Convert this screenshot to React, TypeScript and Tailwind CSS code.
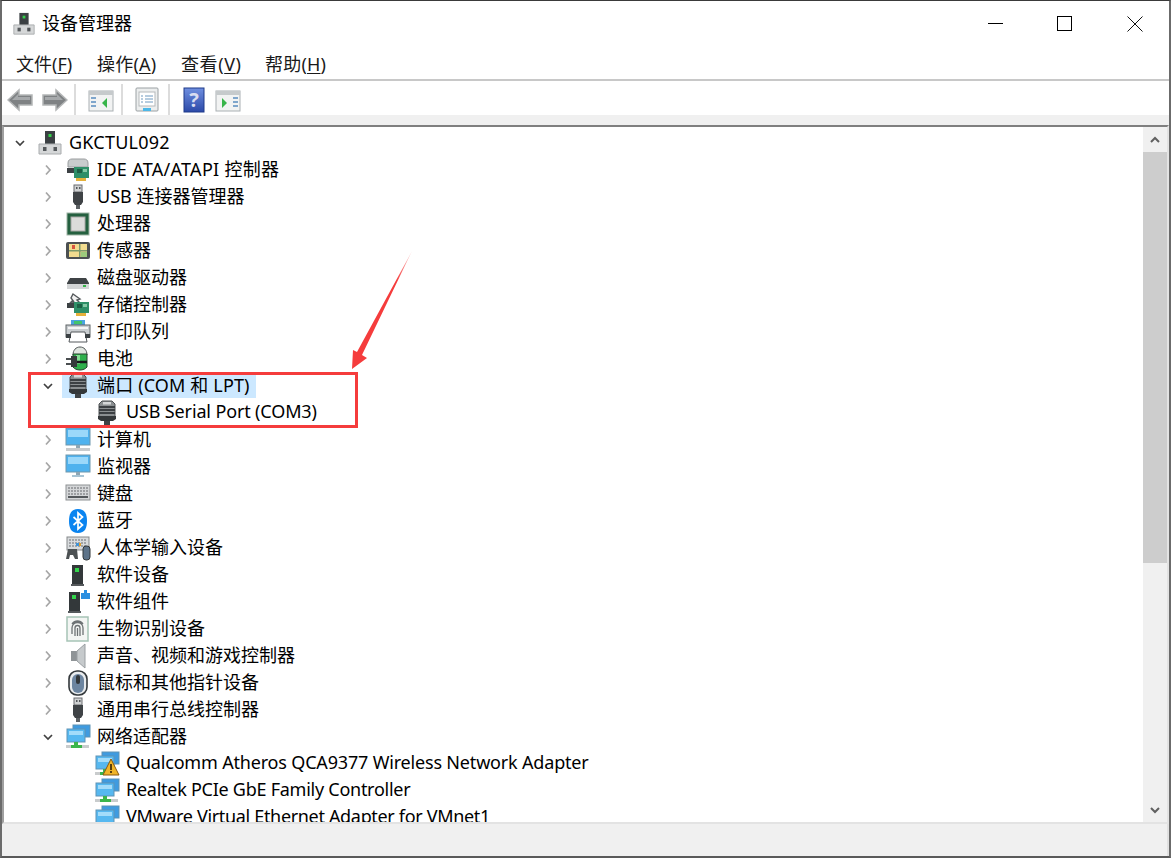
import type { ReactNode } from 'react';

const font = 'font-["Noto_Sans","Noto_Sans_CJK_SC",sans-serif]';

function Svg({ children, size = 26 }: { children: ReactNode; size?: number }) {
  return (
    <svg width={size} height={size} viewBox="0 0 26 26" className="shrink-0">
      {children}
    </svg>
  );
}

// device icons, drawn on a 26 box
const Tower = ({ size = 26 }: { size?: number }) => (
  <Svg size={size}>
    <rect x="8" y="1" width="10" height="15" fill="#3b4043" />
    <rect x="11.5" y="4" width="3" height="3" fill="#35d04a" />
    <path d="M2 14h22v10H2z" fill="#d5d7d8" stroke="#a9acae" />
    <rect x="6" y="17" width="3.5" height="4" fill="#55595c" />
    <rect x="16.5" y="17" width="3.5" height="4" fill="#55595c" />
  </Svg>
);

const Card = ({ arrow }: { arrow?: boolean }) => (
  <Svg>
    {arrow ? (
      <path d="M8 2l7 5-3 1 3 3H5l2-2 2 1-3-4z" fill="#f2f2f2" stroke="#55595c" strokeWidth="1.4" />
    ) : (
      <path d="M3 6c0-3 2-4 4-4h12c2 0 4 1 4 4v4H3z" fill="#c9cccd" stroke="#9a9d9f" />
    )}
    <path d="M2 11h13v5H2z" fill="#3c4144" />
    <rect x="9" y="10" width="15" height="11" fill="#2f8f68" />
    <rect x="12" y="12" width="5" height="4" fill="#1d5f45" />
    <rect x="18" y="12" width="4" height="3" fill="#86c8a6" />
    <rect x="11" y="21" width="10" height="3" fill="#e5b13a" />
  </Svg>
);

const Plug = () => (
  <Svg>
    <rect x="9" y="1" width="8" height="7" fill="#cfd1d2" stroke="#6a6d70" />
    <rect x="11" y="3" width="1.5" height="2" fill="#55595c" />
    <rect x="14" y="3" width="1.5" height="2" fill="#55595c" />
    <path d="M8 8h10v10l-2 3h-6l-2-3z" fill="#3f4346" />
    <rect x="11" y="21" width="4" height="4" fill="#5c6063" />
  </Svg>
);

const Cpu = () => (
  <Svg>
    <rect x="1.5" y="1.5" width="23" height="23" fill="#9fb5a6" />
    <rect x="2.5" y="2.5" width="21" height="21" fill="#24603f" />
    <rect x="6" y="6" width="14" height="14" fill="#dcdcda" stroke="#a8a8a6" />
  </Svg>
);

const Sensor = () => (
  <Svg>
    <rect x="1" y="4" width="24" height="17" rx="2" fill="#4c5052" />
    <rect x="4" y="6" width="18" height="13" fill="#f2dc8f" />
    <rect x="4" y="12" width="18" height="1.5" fill="#7d9a6a" />
    <rect x="14" y="6" width="1.5" height="13" fill="#7d9a6a" />
    <rect x="7" y="7" width="3" height="4" fill="#d8553f" />
    <rect x="16" y="14" width="6" height="5" fill="#9dcb7c" />
  </Svg>
);

const Disk = () => (
  <Svg>
    <path d="M5 13h16l3 5v5H2v-5z" fill="#3f4346" />
    <rect x="2" y="19" width="22" height="5" fill="#d3d5d6" />
    <rect x="18" y="20" width="3" height="2" fill="#36b24a" />
  </Svg>
);

const Printer = () => (
  <Svg>
    <rect x="6" y="1" width="14" height="7" fill="#4aa3e0" />
    <rect x="9" y="2" width="8" height="3" fill="#42c46b" />
    <rect x="1" y="6" width="24" height="12" fill="#c9cdd0" stroke="#5f6467" />
    <rect x="3" y="8" width="20" height="2" fill="#f5f5f5" />
    <path d="M6 13h14l2 10H4z" fill="#fff" stroke="#55595c" />
    <rect x="1" y="15" width="5" height="4" fill="#3b4043" />
    <rect x="20" y="15" width="5" height="4" fill="#3b4043" />
  </Svg>
);

const Battery = () => (
  <Svg>
    <path d="M8 9c0-5 3-8 7-8s7 3 7 8z" fill="#dfe5df" stroke="#4e5355" />
    <path d="M8 8h14v13c-3 4-11 4-14 0z" fill="#2fb04c" stroke="#26402d" />
    <path d="M11 9h4v9h-4z" fill="#84de94" />
    <path d="M1 13h6M1 18h6" stroke="#4a4e50" strokeWidth="2" />
    <path d="M6 10h6v11H6z" fill="#35393b" />
    <path d="M12 16h10" stroke="#17191a" strokeWidth="2.5" />
  </Svg>
);

const Port = () => (
  <Svg>
    <path d="M8 1h10l3 3v13H5V4z" fill="#8b8f91" stroke="#4c5053" />
    <path d="M5 7h16M5 10h16M5 13h16" stroke="#3c4043" strokeWidth="1.8" />
    <rect x="9" y="2" width="8" height="2.5" fill="#d5d7d8" />
    <path d="M4 16h18v3l-3 2H7l-3-2z" fill="#34383a" />
    <rect x="10" y="21" width="6" height="4" fill="#3f4346" />
  </Svg>
);

const Monitor = ({ laptop }: { laptop?: boolean }) => (
  <Svg>
    <rect x="1" y="1" width="24" height="17" fill="#4fb2ee" stroke="#6f97ad" />
    <rect x="3" y="3" width="20" height="7" fill="#9bd8fa" />
    <rect x="11" y="18" width="4" height="3" fill="#8fa6b3" />
    {laptop ? (
      <rect x="1" y="21" width="24" height="3" fill="#c8cbcd" />
    ) : (
      <rect x="7" y="21" width="12" height="2" fill="#a8c4d4" />
    )}
  </Svg>
);

const Keyboard = () => (
  <Svg>
    <rect x="1" y="4" width="24" height="15" fill="#d4d6d8" stroke="#8e9193" />
    <path d="M3 7h20M3 10h20M3 13h20" stroke="#8a8d90" strokeWidth="1.4" strokeDasharray="2 1" />
    <rect x="3" y="15" width="20" height="2" fill="#55595c" />
  </Svg>
);

const Bluetooth = () => (
  <Svg>
    <path d="M13 1c7 0 9 5 9 12s-2 12-9 12S4 20 4 13 6 1 13 1z" fill="#0a84f0" />
    <path d="M8.5 9l9 8-4.5 4V5l4.5 4-9 8" fill="none" stroke="#fff" strokeWidth="1.7" />
  </Svg>
);

const Hid = () => (
  <Svg>
    <rect x="2" y="2" width="22" height="13" fill="#d8dbdd" stroke="#85898b" />
    <path d="M4 5h18M4 8h18M4 11h18" stroke="#8f9396" strokeWidth="1.3" strokeDasharray="2 1" />
    <rect x="11" y="8" width="3" height="3" fill="#3f94dc" />
    <rect x="14" y="8" width="2" height="3" fill="#e0a030" />
    <path d="M1 24l2-10h9l1 10h-3l-2-4H5l-1 4z" fill="#4c5153" />
    <rect x="18" y="11" width="7" height="14" rx="3" fill="#5d7389" stroke="#33383b" />
  </Svg>
);

const SoftDevice = ({ puzzle }: { puzzle?: boolean }) => (
  <Svg>
    <rect x={puzzle ? 4 : 7} y="3" width="11" height="20" fill="#33383a" />
    <rect x={puzzle ? 7 : 10} y="6" width="4" height="4" fill="#33d64c" />
    <rect x={puzzle ? 3 : 6} y="22" width="13" height="2" fill="#55595c" />
    {puzzle && <path d="M16 4h3V1h3v3h3v6h-9z" fill="#2a8fe0" />}
  </Svg>
);

const Fingerprint = () => (
  <Svg>
    <rect x="2" y="1" width="21" height="24" fill="#f3f5f3" stroke="#a6c4b6" strokeWidth="1.5" />
    <path
      d="M7 18v-6a5.5 5.5 0 0 1 11 0v7M10 20v-8a2.5 2.5 0 0 1 5 0v8M12.5 12v8M7 8c3-4 8-4 11 0"
      fill="none"
      stroke="#6d7274"
      strokeWidth="1.3"
    />
  </Svg>
);

const Speaker = () => (
  <Svg>
    <rect x="6" y="8" width="6" height="10" fill="#8f9497" />
    <path d="M12 8l8-7v24l-8-7z" fill="#c6cacc" stroke="#9a9fa2" />
  </Svg>
);

const Mouse = () => (
  <Svg>
    <rect x="4" y="1" width="18" height="24" rx="8" fill="#e9ecee" stroke="#33383b" strokeWidth="1.6" />
    <rect x="7" y="4" width="12" height="19" rx="6" fill="#6c85a0" />
    <rect x="11" y="5" width="4" height="9" rx="2" fill="#33383b" />
  </Svg>
);

const Net = ({ warn }: { warn?: boolean }) => (
  <Svg>
    <rect x="8" y="1" width="17" height="12" fill="#3f9be0" stroke="#5e93b5" />
    <rect x="2" y="5" width="18" height="13" fill="#56b8f0" stroke="#5e93b5" />
    <rect x="4" y="7" width="14" height="4" fill="#a3dcfa" />
    <rect x="9" y="18" width="4" height="3" fill="#3cb54c" />
    <rect x="1" y="21" width="23" height="3" fill="#c9cccd" />
    <rect x="6" y="21" width="11" height="3" fill="#3cb54c" />
    {warn && (
      <>
        <path d="M17 8l8 16H9z" fill="#f0b428" stroke="#8a5a10" />
        <rect x="16.2" y="13" width="1.6" height="6" fill="#33230a" />
        <rect x="16.2" y="20" width="1.6" height="2" fill="#33230a" />
      </>
    )}
  </Svg>
);

function Chevron({ open }: { open?: boolean }) {
  return (
    <svg width="16" height="16" viewBox="0 0 16 16" className="shrink-0">
      <path
        d={open ? 'M4 6l4 4 4-4' : 'M6 3.5l4 4.5-4 4.5'}
        fill="none"
        stroke={open ? '#404040' : '#a6a6a6'}
        strokeWidth="1.7"
      />
    </svg>
  );
}

type Row = {
  label: string;
  icon: ReactNode;
  level: number;
  open?: boolean;
  leaf?: boolean;
  selected?: boolean;
  track?: string;
};

const rows: Row[] = [
  { label: 'GKCTUL092', icon: <Tower />, level: 0, open: true, track: 'tracking-[0.22px]' },
  { label: 'IDE ATA/ATAPI 控制器', icon: <Card />, level: 1, track: 'tracking-[0.3px]' },
  { label: 'USB 连接器管理器', icon: <Plug />, level: 1 },
  { label: '处理器', icon: <Cpu />, level: 1 },
  { label: '传感器', icon: <Sensor />, level: 1 },
  { label: '磁盘驱动器', icon: <Disk />, level: 1 },
  { label: '存储控制器', icon: <Card arrow />, level: 1 },
  { label: '打印队列', icon: <Printer />, level: 1 },
  { label: '电池', icon: <Battery />, level: 1 },
  { label: '端口 (COM 和 LPT)', icon: <Port />, level: 1, open: true, selected: true, track: 'tracking-[0.15px]' },
  { label: 'USB Serial Port (COM3)', icon: <Port />, level: 2, leaf: true, track: 'tracking-[-0.14px]' },
  { label: '计算机', icon: <Monitor laptop />, level: 1 },
  { label: '监视器', icon: <Monitor />, level: 1 },
  { label: '键盘', icon: <Keyboard />, level: 1 },
  { label: '蓝牙', icon: <Bluetooth />, level: 1 },
  { label: '人体学输入设备', icon: <Hid />, level: 1 },
  { label: '软件设备', icon: <SoftDevice />, level: 1 },
  { label: '软件组件', icon: <SoftDevice puzzle />, level: 1 },
  { label: '生物识别设备', icon: <Fingerprint />, level: 1 },
  { label: '声音、视频和游戏控制器', icon: <Speaker />, level: 1 },
  { label: '鼠标和其他指针设备', icon: <Mouse />, level: 1 },
  { label: '通用串行总线控制器', icon: <Plug />, level: 1 },
  { label: '网络适配器', icon: <Net />, level: 1, open: true },
  { label: 'Qualcomm Atheros QCA9377 Wireless Network Adapter', icon: <Net warn />, level: 2, leaf: true, track: 'tracking-[-0.18px]' },
  { label: 'Realtek PCIe GbE Family Controller', icon: <Net />, level: 2, leaf: true, track: 'tracking-[-0.26px]' },
  { label: 'VMware Virtual Ethernet Adapter for VMnet1', icon: <Net />, level: 2, leaf: true, track: 'tracking-[-0.33px]' },
];

function TreeRow({ row }: { row: Row }) {
  const indent = row.level === 0 ? 'pl-2' : row.level === 1 ? 'pl-9' : 'pl-[65px]';
  return (
    <div className={`flex h-[27px] shrink-0 items-center ${indent}`}>
      {row.leaf ? <span className="w-4 shrink-0" /> : <Chevron open={row.open} />}
      <div className={`ml-[6px] flex h-[25px] items-center pl-[3px] pr-[6px] ${row.selected ? 'bg-[#cce8ff]' : ''}`}>
        {row.icon}
        <span className={`ml-[6px] whitespace-nowrap text-[18px] leading-[25px] text-black ${row.leaf ? 'pb-[2px]' : ''} ${row.track ?? ''}`}>
          {row.label}
        </span>
      </div>
    </div>
  );
}

function MenuItem({ label, hot, className }: { label: string; hot: string; className: string }) {
  return (
    <span className={`whitespace-nowrap text-[18px] text-[#1a1a1a] ${className}`}>
      {label}(<span className="underline underline-offset-2">{hot}</span>)
    </span>
  );
}

const Divider = () => <div className="mx-[6px] h-[31px] w-[2px] bg-[#dcdcdc]" />;

const ArrowBtn = ({ flip }: { flip?: boolean }) => (
  <svg width="26" height="24" viewBox="0 0 26 24" className={flip ? 'scale-x-[-1]' : ''}>
    <path d="M1 12L12 2v5h13v10H12v5z" fill="#7f8284" stroke="#b4b6b7" strokeWidth="1.5" />
    <path d="M5 12l6-6v3h12v3H5z" fill="#a6a9ab" />
  </svg>
);

const PaneIcon = ({ right }: { right?: boolean }) => (
  <svg width="26" height="24" viewBox="0 0 26 24">
    <rect x="1" y="3" width="24" height="20" fill="#f2f3f3" stroke="#aab0b3" />
    <rect x="1" y="3" width="24" height="4" fill="#c6cacc" />
    {right ? (
      <>
        <path d="M7 10l5 5-5 5z" fill="#38b54a" />
        <path d="M18 10h5M18 14h5M18 18h5" stroke="#7fa6cc" strokeWidth="2" />
      </>
    ) : (
      <>
        <path d="M3 10h5M3 14h5M3 18h5" stroke="#7fa6cc" strokeWidth="2" />
        <path d="M19 10l-5 5 5 5z" fill="#38b54a" />
      </>
    )}
  </svg>
);

export default function App() {
  return (
    <div className={`relative flex h-[858px] w-[1171px] flex-col overflow-hidden border-b-2 border-l-2 border-r-2 border-t border-b-[#5a5a5a] border-l-[#6b6b6b] border-r-[#6b6b6b] border-t-[#3a3a3a] bg-white ${font}`}>
      {/* Title bar */}
      <div className="flex h-[47px] shrink-0 items-center pb-[2px] pl-[10px]">
        <Tower size={24} />
        <span className="ml-[6px] text-[18px] text-black">设备管理器</span>
        <div className="ml-auto flex items-center">
          <div className="h-[1px] w-[15px] bg-black" />
          <div className="ml-[54px] h-[15px] w-[15px] border border-black" />
          <svg width="16" height="16" viewBox="0 0 16 16" className="ml-[55px] mr-[26px]">
            <path d="M.5.5l15 15M15.5.5l-15 15" stroke="#111" strokeWidth="1" />
          </svg>
        </div>
      </div>

      {/* Menu */}
      <div className="flex h-[33px] shrink-0 items-center gap-[24px] border-b-2 border-[#c8c8c8] pl-[14px] pt-[2px]">
        <MenuItem label="文件" hot="F" className="w-[57px]" />
        <MenuItem label="操作" hot="A" className="w-[60px] tracking-[0.2px]" />
        <MenuItem label="查看" hot="V" className="w-[60px] tracking-[0.6px]" />
        <MenuItem label="帮助" hot="H" className="w-[61px] tracking-[0.2px]" />
      </div>

      {/* Toolbar */}
      <div className="flex h-[34px] shrink-0 items-center pl-[5px] pt-[3px]">
        <ArrowBtn />
        <div className="w-[9px]" />
        <ArrowBtn flip />
        <Divider />
        <div className="ml-[6px]"><PaneIcon /></div>
        <div className="ml-[1px]"><Divider /></div>
        <svg width="26" height="26" viewBox="0 0 26 26" className="ml-[5px]">
          <rect x="2" y="1" width="22" height="23" rx="1" fill="#eceeee" stroke="#9aa0a3" />
          <rect x="5" y="5" width="16" height="14" fill="#fff" stroke="#b5b9bb" />
          <path d="M7 9h2M11 9h8M7 12h2M11 12h8M7 15h2M11 15h8" stroke="#6f9ac0" />
          <rect x="9" y="21" width="8" height="3" fill="#4cb8e8" />
        </svg>
        <div className="ml-[2px]"><Divider /></div>
        <svg width="24" height="26" viewBox="0 0 24 26" className="ml-[6px]">
          <defs>
            <linearGradient id="help" x1="0" y1="0" x2="0" y2="1">
              <stop offset="0" stopColor="#6f8fe0" />
              <stop offset="1" stopColor="#2b49a8" />
            </linearGradient>
          </defs>
          <rect x="2" y="1" width="20" height="24" fill="url(#help)" stroke="#1e3a8a" />
          <text x="12" y="20" textAnchor="middle" fontSize="20" fontWeight="700" fill="#d8dcf0">?</text>
        </svg>
        <div className="ml-[9px]"><PaneIcon right /></div>
      </div>

      {/* Gray band */}
      <div className="h-[10px] shrink-0 bg-[#f0f0f0]" />

      {/* Tree + scrollbar */}
      <div className="flex min-h-0 flex-1 border-l-2 border-r-2 border-t-2 border-b-2 border-l-[#a0a0a0] border-r-[#e3e3e3] border-t-[#7f7f7f] border-b-[#e3e3e3]">
        <div className="flex min-w-0 flex-1 flex-col overflow-hidden pt-[2px]">
          {rows.map((row) => (
            <TreeRow key={row.label + row.level} row={row} />
          ))}
        </div>
        <div className="flex w-[24px] shrink-0 flex-col bg-[#f0f0f0]">
          <div className="flex h-[25px] items-center justify-center">
            <svg width="10" height="8" viewBox="0 0 10 8">
              <path d="M1 6l4-4 4 4" fill="none" stroke="#606060" strokeWidth="2" />
            </svg>
          </div>
          <div className="h-[411px] bg-[#cdcdcd]" />
          <div className="mt-auto flex h-[25px] items-center justify-center">
            <svg width="10" height="8" viewBox="0 0 10 8">
              <path d="M1 2l4 4 4-4" fill="none" stroke="#606060" strokeWidth="2" />
            </svg>
          </div>
        </div>
      </div>

      {/* Status bar */}
      <div className="flex h-[32px] shrink-0 justify-end bg-[#f0f0f0]">
        <div className="w-[2px] bg-[#e0e0e0]" />
      </div>

      {/* Annotation */}
      <div className="absolute left-[26px] top-[371px] h-[56px] w-[330px] border-[3px] border-[#f53c3c]" />
      <svg className="absolute left-[-2px] top-[-1px]" width="1171" height="858" viewBox="0 0 1171 858">
        <defs>
          <linearGradient id="tail" x1="412" y1="251" x2="352" y2="369" gradientUnits="userSpaceOnUse">
            <stop offset="0" stopColor="#f53c3c" stopOpacity="0.2" />
            <stop offset="0.25" stopColor="#f53c3c" />
          </linearGradient>
        </defs>
        <path d="M412 251L362 355l5 3-15 11 1-19 4 2z" fill="url(#tail)" />
      </svg>
    </div>
  );
}
